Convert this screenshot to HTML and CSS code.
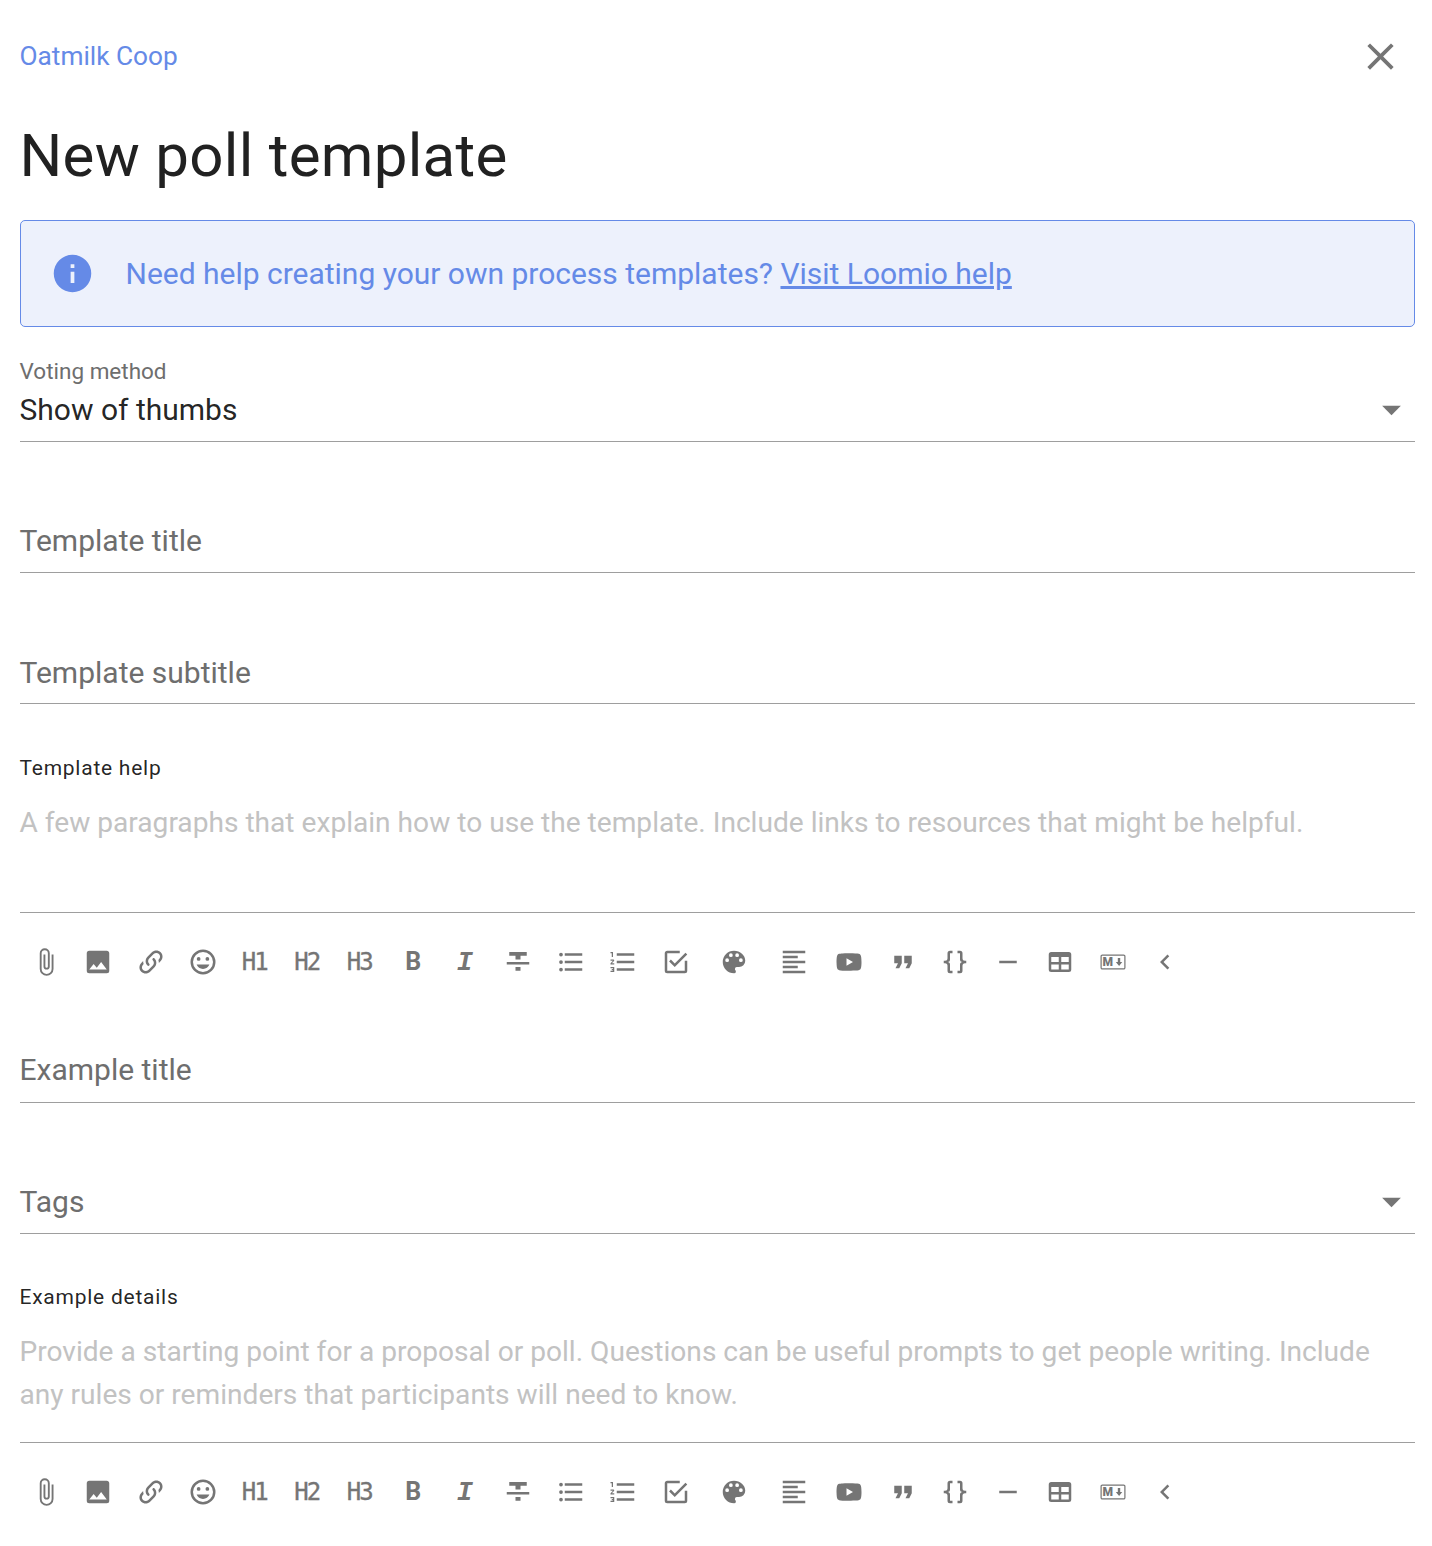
FILE: index.html
```html
<!DOCTYPE html>
<html lang="en">
<head>
<meta charset="utf-8">
<title>New poll template</title>
<link rel="stylesheet" href="styles.css">
</head>
<body>
<svg class="sprite" xmlns="http://www.w3.org/2000/svg">
<symbol id="i-clip" viewBox="0 0 24 24"><path d="M16.5,6V17.5A4,4 0 0,1 12.5,21.5A4,4 0 0,1 8.5,17.5V5A2.5,2.5 0 0,1 11,2.5A2.5,2.5 0 0,1 13.5,5V15.5A1,1 0 0,1 12.5,16.5A1,1 0 0,1 11.5,15.5V6H10V15.5A2.5,2.5 0 0,0 12.5,18A2.5,2.5 0 0,0 15,15.5V5A4,4 0 0,0 11,1A4,4 0 0,0 7,5V17.5A5.5,5.5 0 0,0 12.5,23A5.5,5.5 0 0,0 18,17.5V6H16.5Z"/></symbol>
<symbol id="i-image" viewBox="0 0 24 24"><path d="M8.5,13.5L11,16.5L14.5,12L19,18H5M21,19V5C21,3.89 20.1,3 19,3H5A2,2 0 0,0 3,5V19A2,2 0 0,0 5,21H19A2,2 0 0,0 21,19Z"/></symbol>
<symbol id="i-link" viewBox="0 0 24 24"><path d="M10.59,13.41C11,13.8 11,14.44 10.59,14.83C10.2,15.22 9.56,15.22 9.17,14.83C7.22,12.88 7.22,9.71 9.17,7.76V7.76L12.71,4.22C14.66,2.27 17.83,2.27 19.78,4.22C21.73,6.17 21.73,9.34 19.78,11.29L18.29,12.78C18.3,11.96 18.17,11.14 17.89,10.36L18.36,9.88C19.54,8.71 19.54,6.81 18.36,5.64C17.19,4.46 15.29,4.46 14.12,5.64L10.59,9.17C9.41,10.34 9.41,12.24 10.59,13.41M13.41,9.17C13.8,8.78 14.44,8.78 14.83,9.17C16.78,11.12 16.78,14.29 14.83,16.24V16.24L11.29,19.78C9.34,21.73 6.17,21.73 4.22,19.78C2.27,17.83 2.27,14.66 4.22,12.71L5.71,11.22C5.7,12.04 5.83,12.86 6.11,13.65L5.64,14.12C4.46,15.29 4.46,17.19 5.64,18.36C6.81,19.54 8.71,19.54 9.88,18.36L13.41,14.83C14.59,13.66 14.59,11.76 13.41,10.59C13,10.2 13,9.56 13.41,9.17Z"/></symbol>
<symbol id="i-emoji" viewBox="0 0 24 24"><path d="M12,17.5C14.33,17.5 16.3,16.04 17.11,14H6.89C7.69,16.04 9.67,17.5 12,17.5M8.5,11A1.5,1.5 0 0,0 10,9.5A1.5,1.5 0 0,0 8.5,8A1.5,1.5 0 0,0 7,9.5A1.5,1.5 0 0,0 8.5,11M15.5,11A1.5,1.5 0 0,0 17,9.5A1.5,1.5 0 0,0 15.5,8A1.5,1.5 0 0,0 14,9.5A1.5,1.5 0 0,0 15.5,11M12,20A8,8 0 0,1 4,12A8,8 0 0,1 12,4A8,8 0 0,1 20,12A8,8 0 0,1 12,20M12,2C6.47,2 2,6.5 2,12A10,10 0 0,0 12,22A10,10 0 0,0 22,12A10,10 0 0,0 12,2Z"/></symbol>
<symbol id="i-strike" viewBox="0 0 24 24"><path d="M3,14H21V12H3M5,4V7H10V10H14V7H19V4M10,19H14V16H10V19Z"/></symbol>
<symbol id="i-bullets" viewBox="0 0 24 24"><path d="M7,5H21V7H7V5M7,13V11H21V13H7M4,4.5A1.5,1.5 0 0,1 5.5,6A1.5,1.5 0 0,1 4,7.5A1.5,1.5 0 0,1 2.5,6A1.5,1.5 0 0,1 4,4.5M4,10.5A1.5,1.5 0 0,1 5.5,12A1.5,1.5 0 0,1 4,13.5A1.5,1.5 0 0,1 2.5,12A1.5,1.5 0 0,1 4,10.5M7,19V17H21V19H7M4,16.5A1.5,1.5 0 0,1 5.5,18A1.5,1.5 0 0,1 4,19.5A1.5,1.5 0 0,1 2.5,18A1.5,1.5 0 0,1 4,16.5Z"/></symbol>
<symbol id="i-numbers" viewBox="0 0 24 24"><path d="M7,13V11H21V13H7M7,19V17H21V19H7M7,7V5H21V7H7M3,8V5H2V4H4V8H3M2,17V16H5V20H2V19H4V18.5H3V17.5H4V17H2M4.25,10A0.75,0.75 0 0,1 5,10.75C5,10.95 4.92,11.14 4.79,11.27L3.12,13H5V14H2V13.08L4,11H2V10H4.25Z"/></symbol>
<symbol id="i-check" viewBox="0 0 24 24"><path d="M19,19H5V5H15V3H5C3.89,3 3,3.89 3,5V19A2,2 0 0,0 5,21H19A2,2 0 0,0 21,19V11H19M7.91,10.08L6.5,11.5L11,16L21,6L19.59,4.58L11,13.17L7.91,10.08Z"/></symbol>
<symbol id="i-palette" viewBox="0 0 24 24"><path d="M17.5,12A1.5,1.5 0 0,1 16,10.5A1.5,1.5 0 0,1 17.5,9A1.5,1.5 0 0,1 19,10.5A1.5,1.5 0 0,1 17.5,12M14.5,8A1.5,1.5 0 0,1 13,6.5A1.5,1.5 0 0,1 14.5,5A1.5,1.5 0 0,1 16,6.5A1.5,1.5 0 0,1 14.5,8M9.5,8A1.5,1.5 0 0,1 8,6.5A1.5,1.5 0 0,1 9.5,5A1.5,1.5 0 0,1 11,6.5A1.5,1.5 0 0,1 9.5,8M6.5,12A1.5,1.5 0 0,1 5,10.5A1.5,1.5 0 0,1 6.5,9A1.5,1.5 0 0,1 8,10.5A1.5,1.5 0 0,1 6.5,12M12,3A9,9 0 0,0 3,12A9,9 0 0,0 12,21A1.5,1.5 0 0,0 13.5,19.5C13.5,19.11 13.35,18.76 13.11,18.5C12.88,18.23 12.73,17.88 12.73,17.5A1.5,1.5 0 0,1 14.23,16H16A5,5 0 0,0 21,11C21,6.58 16.97,3 12,3Z"/></symbol>
<symbol id="i-align" viewBox="0 0 24 24"><path d="M3,3H21V5H3V3M3,7H15V9H3V7M3,11H21V13H3V11M3,15H15V17H3V15M3,19H21V21H3V19Z"/></symbol>
<symbol id="i-youtube" viewBox="0 0 24 24"><path d="M10,15L15.19,12L10,9V15M21.56,7.17C21.69,7.64 21.78,8.27 21.84,9.07C21.91,9.87 21.94,10.56 21.94,11.16L22,12C22,14.19 21.84,15.8 21.56,16.83C21.31,17.73 20.73,18.31 19.83,18.56C19.36,18.69 18.5,18.78 17.18,18.84C15.88,18.91 14.69,18.94 13.59,18.94L12,19C7.81,19 5.2,18.84 4.17,18.56C3.27,18.31 2.69,17.73 2.44,16.83C2.31,16.36 2.22,15.73 2.16,14.93C2.09,14.13 2.06,13.44 2.06,12.84L2,12C2,9.81 2.16,8.2 2.44,7.17C2.69,6.27 3.27,5.69 4.17,5.44C4.64,5.31 5.5,5.22 6.82,5.16C8.12,5.09 9.31,5.06 10.41,5.06L12,5C16.19,5 18.8,5.16 19.83,5.44C20.73,5.69 21.31,6.27 21.56,7.17Z"/></symbol>
<symbol id="i-quote" viewBox="0 0 24 24"><path d="M14,17H17L19,13V7H13V13H16L14,17M6,17H9L11,13V7H5V13H8L6,17Z"/></symbol>
<symbol id="i-braces" viewBox="0 0 24 24"><path d="M8,3A2,2 0 0,0 6,5V9A2,2 0 0,1 4,11H3V13H4A2,2 0 0,1 6,15V19A2,2 0 0,0 8,21H10V19H8V14A2,2 0 0,0 6,12A2,2 0 0,0 8,10V5H10V3M16,3A2,2 0 0,1 18,5V9A2,2 0 0,0 20,11H21V13H20A2,2 0 0,0 18,15V19A2,2 0 0,1 16,21H14V19H16V14A2,2 0 0,1 18,12A2,2 0 0,1 16,10V5H14V3H16Z"/></symbol>
<symbol id="i-minus" viewBox="0 0 24 24"><path d="M19,13H5V11H19V13Z"/></symbol>
<symbol id="i-table" viewBox="0 0 24 24"><path d="M5,4H19A2,2 0 0,1 21,6V18A2,2 0 0,1 19,20H5A2,2 0 0,1 3,18V6A2,2 0 0,1 5,4M5,8V12H11V8H5M13,8V12H19V8H13M5,14V18H11V14H5M13,14V18H19V14H13Z"/></symbol>
<symbol id="i-md-frame" viewBox="0 0 24 24"><path d="M20.56 18H3.44C2.65 18 2 17.37 2 16.59V7.41C2 6.63 2.65 6 3.44 6H20.56C21.35 6 22 6.63 22 7.41V16.59C22 17.37 21.35 18 20.56 18M3.44 6.94C3.18 6.94 2.97 7.15 2.97 7.41V16.59C2.97 16.85 3.18 17.06 3.44 17.06H20.56C20.82 17.06 21.03 16.85 21.03 16.59V7.41C21.03 7.15 20.82 6.94 20.56 6.94H3.44M16.89 15.19L14.25 12H15.85V8.81H17.77V12H19.38L16.89 15.19Z"/></symbol>
<symbol id="i-chevron" viewBox="0 0 24 24"><path d="M15.41,16.58L10.83,12L15.41,7.41L14,6L8,12L14,18L15.41,16.58Z"/></symbol>
<symbol id="i-close" viewBox="0 0 24 24"><path d="M19,6.41L17.59,5L12,10.59L6.41,5L5,6.41L10.59,12L5,17.59L6.41,19L12,13.41L17.59,19L19,17.59L13.41,12L19,6.41Z"/></symbol>
<symbol id="i-info" viewBox="0 0 24 24"><path d="M13,9H11V7H13M13,17H11V11H13M12,2A10,10 0 0,0 2,12A10,10 0 0,0 12,22A10,10 0 0,0 22,12A10,10 0 0,0 12,2Z"/></symbol>
<symbol id="i-caret" viewBox="0 0 24 24"><path d="M7,10L12,15L17,10H7Z"/></symbol>
</svg>

<main class="page">
  <header class="topbar">
    <a class="group-link" href="#">Oatmilk Coop</a>
    <button class="close-btn" aria-label="Close"><svg class="close-icon"><use href="#i-close"/></svg></button>
  </header>
  <h1 class="title">New poll template</h1>

  <div class="alert">
    <svg class="alert-icon"><use href="#i-info"/></svg>
    <p class="alert-text">Need help creating your own process templates? <a class="alert-link" href="#">Visit Loomio help</a></p>
  </div>

  <div class="field field-select">
    <div class="small-label">Voting method</div>
    <div class="field-row field-row-value"><span class="value">Show of thumbs</span><svg class="caret"><use href="#i-caret"/></svg></div>
  </div>

  <div class="field field-title"><div class="field-row"><span class="hint">Template title</span></div></div>
  <div class="field field-sub"><div class="field-row"><span class="hint">Template subtitle</span></div></div>

  <section class="editor editor-help">
    <div class="editor-label">Template help</div>
    <div class="editor-body"><p class="placeholder">A few paragraphs that explain how to use the template. Include links to resources that might be helpful.</p></div>
    <div class="toolbar">
      <span class="tool"><svg class="ic"><use href="#i-clip"/></svg></span>
      <span class="tool"><svg class="ic"><use href="#i-image"/></svg></span>
      <span class="tool"><svg class="ic"><use href="#i-link"/></svg></span>
      <span class="tool"><svg class="ic"><use href="#i-emoji"/></svg></span>
      <span class="tool tool-text tool-h">H1</span>
      <span class="tool tool-text tool-h">H2</span>
      <span class="tool tool-text tool-h">H3</span>
      <span class="tool tool-text tool-b">B</span>
      <span class="tool tool-text tool-i">I</span>
      <span class="tool"><svg class="ic"><use href="#i-strike"/></svg></span>
      <span class="tool"><svg class="ic"><use href="#i-bullets"/></svg></span>
      <span class="tool"><svg class="ic"><use href="#i-numbers"/></svg></span>
      <span class="tool"><svg class="ic"><use href="#i-check"/></svg></span>
      <span class="tool tool-palette"><svg class="ic"><use href="#i-palette"/></svg></span>
      <span class="tool tool-align"><svg class="ic"><use href="#i-align"/></svg></span>
      <span class="tool tool-video"><svg class="ic"><use href="#i-youtube"/></svg></span>
      <span class="tool"><svg class="ic"><use href="#i-quote"/></svg></span>
      <span class="tool"><svg class="ic"><use href="#i-braces"/></svg></span>
      <span class="tool"><svg class="ic"><use href="#i-minus"/></svg></span>
      <span class="tool"><svg class="ic"><use href="#i-table"/></svg></span>
      <span class="tool tool-md"><svg class="ic"><use href="#i-md-frame"/></svg><span class="md-m">M</span></span>
      <span class="tool"><svg class="ic"><use href="#i-chevron"/></svg></span>
    </div>
  </section>

  <div class="field field-example"><div class="field-row"><span class="hint">Example title</span></div></div>
  <div class="field field-tags"><div class="field-row"><span class="hint">Tags</span><svg class="caret"><use href="#i-caret"/></svg></div></div>

  <section class="editor editor-details">
    <div class="editor-label">Example details</div>
    <div class="editor-body"><p class="placeholder">Provide a starting point for a proposal or poll. Questions can be useful prompts to get people writing. Include any rules or reminders that participants will need to know.</p></div>
    <div class="toolbar">
      <span class="tool"><svg class="ic"><use href="#i-clip"/></svg></span>
      <span class="tool"><svg class="ic"><use href="#i-image"/></svg></span>
      <span class="tool"><svg class="ic"><use href="#i-link"/></svg></span>
      <span class="tool"><svg class="ic"><use href="#i-emoji"/></svg></span>
      <span class="tool tool-text tool-h">H1</span>
      <span class="tool tool-text tool-h">H2</span>
      <span class="tool tool-text tool-h">H3</span>
      <span class="tool tool-text tool-b">B</span>
      <span class="tool tool-text tool-i">I</span>
      <span class="tool"><svg class="ic"><use href="#i-strike"/></svg></span>
      <span class="tool"><svg class="ic"><use href="#i-bullets"/></svg></span>
      <span class="tool"><svg class="ic"><use href="#i-numbers"/></svg></span>
      <span class="tool"><svg class="ic"><use href="#i-check"/></svg></span>
      <span class="tool tool-palette"><svg class="ic"><use href="#i-palette"/></svg></span>
      <span class="tool tool-align"><svg class="ic"><use href="#i-align"/></svg></span>
      <span class="tool tool-video"><svg class="ic"><use href="#i-youtube"/></svg></span>
      <span class="tool"><svg class="ic"><use href="#i-quote"/></svg></span>
      <span class="tool"><svg class="ic"><use href="#i-braces"/></svg></span>
      <span class="tool"><svg class="ic"><use href="#i-minus"/></svg></span>
      <span class="tool"><svg class="ic"><use href="#i-table"/></svg></span>
      <span class="tool tool-md"><svg class="ic"><use href="#i-md-frame"/></svg><span class="md-m">M</span></span>
      <span class="tool"><svg class="ic"><use href="#i-chevron"/></svg></span>
    </div>
  </section>
</main>
</body>
</html>
```
FILE: styles.css
```css
* { box-sizing: border-box; }
html, body { margin: 0; padding: 0; background: #fff; }
body { font-family: Roboto, "Liberation Sans", sans-serif; color: rgba(0,0,0,.87); }
.sprite { display: none; }
.page { width: 1432px; height: 1546px; padding: 0 17px 0 19.5px; overflow: hidden; }

.topbar { display: flex; justify-content: space-between; align-items: center; height: 112px; padding-right: 12px; }
.group-link { color: #658ae7; font-size: 26.25px; text-decoration: none; }
.close-btn { border: 0; background: none; padding: 0; width: 45px; height: 45px; }
.close-icon { width: 45px; height: 45px; fill: #757575; display: block; }
.title { margin: 0; height: 108px; font-size: 60px; font-weight: 400; line-height: 88px; letter-spacing: .3px; color: #212121; }

.alert { display: flex; align-items: center; height: 107px; background: #edf1fc; border: 1px solid #658ae7; border-radius: 5px; padding-left: 29.5px; }
.alert-icon { width: 45px; height: 45px; fill: #658ae7; flex: none; }
.alert-text { margin: 0 0 0 30.5px; font-size: 30px; letter-spacing: -.01px; color: #658ae7; }
.alert-link { color: #658ae7; }

.field { border-bottom: 1px solid #9e9e9e; }
.field-row { display: flex; justify-content: space-between; align-items: center; height: 40px; }
.field-row-value { margin-top: 4px; }
.value { font-size: 30px; line-height: 40px; }
.hint { font-size: 30px; line-height: 40px; color: #6e6e6e; }
.caret { width: 45px; height: 45px; fill: #757575; margin: 0 1.5px 2px 0; flex: none; }
.small-label { font-size: 22.5px; line-height: 30px; color: #6e6e6e; }
.field-select { margin-top: 29px; height: 86px; }
.field-title { margin-top: 64px; height: 67px; padding-top: 15px; }
.field-sub { margin-top: 65px; height: 66px; padding-top: 15px; }
.field-example { height: 67px; padding-top: 14px; }
.field-tags { margin-top: 64px; height: 67px; padding-top: 15px; }

.editor-label { font-size: 21px; line-height: 28px; letter-spacing: .75px; }
.editor-help { margin-top: 50px; }
.editor-details { margin-top: 49px; }
.editor-body { border-bottom: 1px solid #9e9e9e; padding-top: 19px; }
.editor-help .editor-body { height: 131px; }
.editor-details .editor-body { height: 132px; }
.placeholder { margin: 0; font-size: 28.125px; line-height: 43px; color: #c2c2c2; }

.toolbar { display: flex; align-items: center; height: 123px; padding-bottom: 26px; }
.tool { width: 52.5px; height: 48px; flex: none; display: flex; align-items: center; justify-content: center; position: relative; }
.ic { width: 30px; height: 30px; fill: #757575; display: block; }
.tool-h { font-family: "DejaVu Sans Mono", monospace; font-size: 24px; letter-spacing: -2px; padding-right: 3px; color: #757575; -webkit-text-stroke: .35px #757575; }
.tool-b { font-weight: 700; font-size: 25px; color: #757575; }
.tool-i { font-family: "Liberation Mono", monospace; font-weight: 700; font-style: italic; font-size: 27px; padding-top: 2px; padding-right: 2px; color: #757575; }
.tool-palette { width: 63.5px; }
.tool-align { width: 56.5px; }
.tool-video { width: 54.5px; }
.md-m { position: absolute; left: 16px; top: 17px; font-size: 12px; font-weight: 900; line-height: 14px; color: #757575; }
```
